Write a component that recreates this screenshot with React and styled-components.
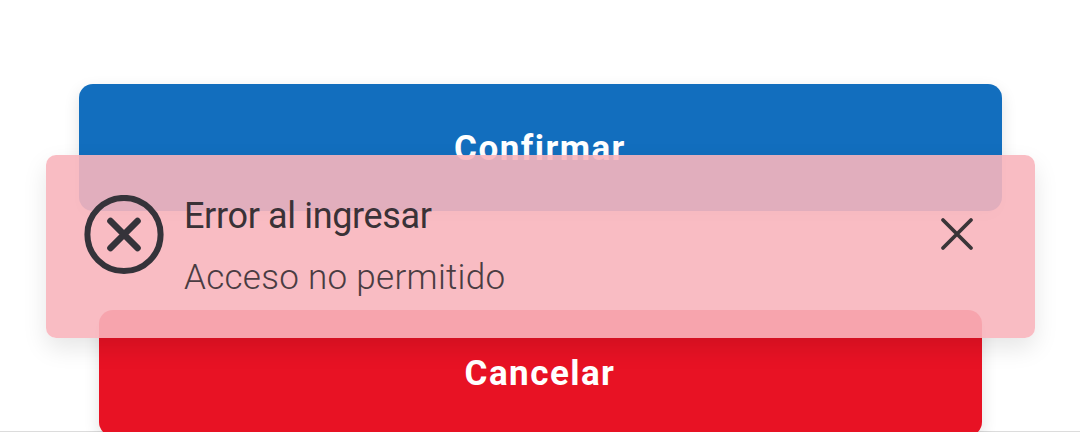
import React from "react";
import styled, { createGlobalStyle } from "styled-components";

const GlobalStyle = createGlobalStyle`
  html, body {
    margin: 0;
    padding: 0;
    background: #ffffff;
  }
`;

const Page = styled.div`
  position: relative;
  width: 1080px;
  height: 432px;
  overflow: hidden;
  background: #ffffff;
  font-family: Roboto, "Liberation Sans", sans-serif;
  display: flex;
  flex-direction: column;
  align-items: center;
  padding-top: 84px;
  box-sizing: border-box;
`;

const Button = styled.button`
  position: relative;
  flex: none;
  display: flex;
  align-items: center;
  justify-content: center;
  box-sizing: border-box;
  width: ${(p) => p.$width}px;
  height: ${(p) => p.$height}px;
  margin-top: ${(p) => p.$top || 0}px;
  padding: 1px 0 0;
  border: none;
  border-radius: 14px;
  background: ${(p) => p.$color};
  color: #ffffff;
  font-family: inherit;
  font-size: 35px;
  font-weight: 700;
  letter-spacing: 1.45px;
  box-shadow: 0 6px 16px rgba(0, 0, 0, 0.12);
`;

const BottomLine = styled.div`
  position: absolute;
  left: 0;
  right: 0;
  bottom: 0;
  height: 1px;
  background: #dcdcdc;
`;

const Toast = styled.div`
  position: absolute;
  left: 46px;
  top: 155px;
  width: 989px;
  height: 183px;
  box-sizing: border-box;
  padding: 40px 61px 0 38px;
  display: flex;
  align-items: flex-start;
  border-radius: 10px;
  background: rgba(248, 181, 188, 0.9);
  box-shadow: 0 10px 24px rgba(0, 0, 0, 0.1);
`;

const ToastBody = styled.div`
  flex: 1;
  margin: 1px 0 0 20px;
  display: flex;
  flex-direction: column;
  gap: 22px;
`;

const ToastTitle = styled.div`
  font-size: 36px;
  line-height: 40px;
  font-weight: 450;
  letter-spacing: -0.35px;
  color: #3a3237;
`;

const ToastText = styled.div`
  font-size: 35px;
  line-height: 40px;
  font-weight: 300;
  letter-spacing: 0.3px;
  color: #4a3c42;
`;

const CloseSlot = styled.div`
  flex: none;
  margin-top: 22px;
  line-height: 0;
`;

const ErrorIcon = () => (
  <svg width="80" height="80" viewBox="0 0 80 80" fill="none" stroke="#35333a" strokeLinecap="round">
    <circle cx="40" cy="39.5" r="36.6" strokeWidth="6" />
    <path d="M26.5 26 L53.5 53 M53.5 26 L26.5 53" strokeWidth="6.6" />
  </svg>
);

const CloseIcon = () => (
  <svg width="34" height="34" viewBox="0 0 34 34" fill="none" stroke="#3a3538" strokeWidth="3.8" strokeLinecap="round">
    <path d="M3 3 L31 31 M31 3 L3 31" />
  </svg>
);

export default function App() {
  return (
    <>
      <GlobalStyle />
      <Page>
        <BottomLine />
        <Button $width={923} $height={127} $color="#126ebe">Confirmar</Button>
        <Button $width={883} $height={126} $top={99} $color="#e81224">Cancelar</Button>
        <Toast>
          <ErrorIcon />
          <ToastBody>
            <ToastTitle>Error al ingresar</ToastTitle>
            <ToastText>Acceso no permitido</ToastText>
          </ToastBody>
          <CloseSlot>
            <CloseIcon />
          </CloseSlot>
        </Toast>
      </Page>
    </>
  );
}
